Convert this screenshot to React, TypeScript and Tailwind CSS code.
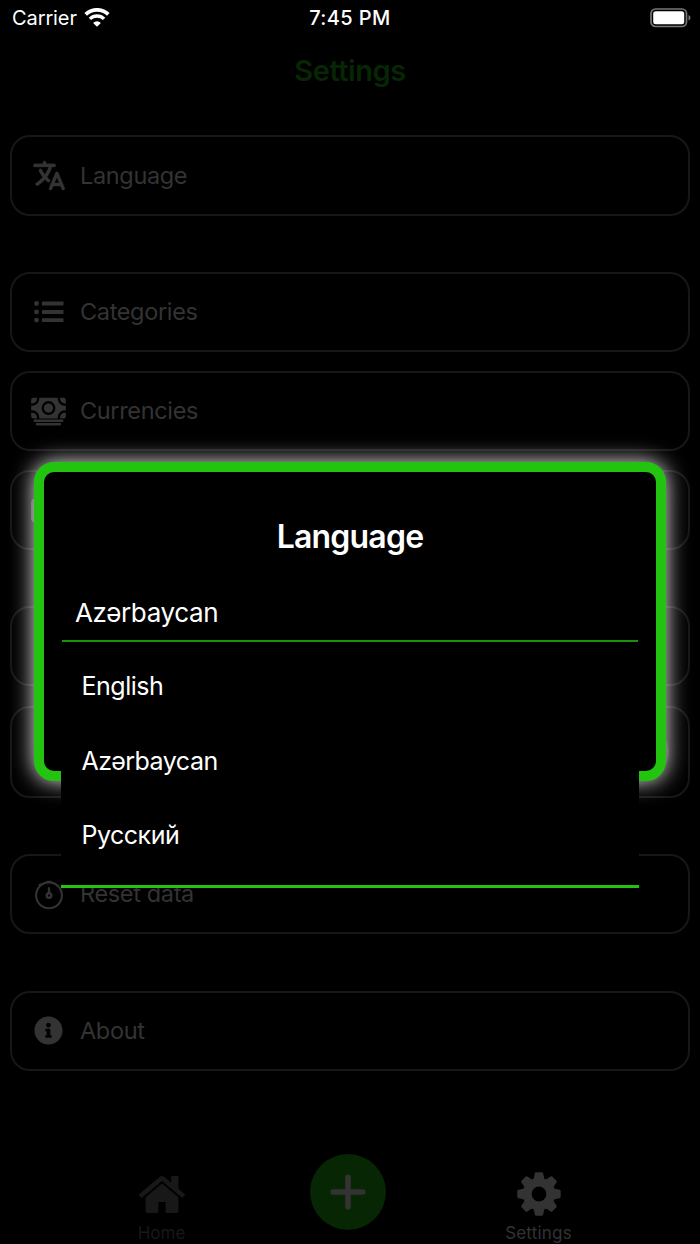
import type { ReactNode } from "react";
import clsx from "clsx";
import { IoCash, IoLanguage } from "react-icons/io5";
import { FaInfoCircle } from "react-icons/fa";

const ListIcon = () => (
  <svg width="30" height="22" viewBox="0 0 30 22" fill="currentColor">
    {[2.5, 11, 19.1].map((y) => (
      <g key={y}>
        <circle cx="2.5" cy={y} r="2.4" />
        <rect x="8" y={y - 1.9} width="21.5" height="3.8" rx="0.6" />
      </g>
    ))}
  </svg>
);

const TimerIcon = () => (
  <svg className="mt-px" width="30" height="30" viewBox="0 0 30 30" fill="none" stroke="currentColor" strokeWidth="2.1" strokeLinecap="round">
    <circle cx="15" cy="15.3" r="12.9" />
    <circle cx="15" cy="15.6" r="2.3" strokeWidth="2.4" />
    <path d="M15 13V8.200M13.400 1.900h3.200M5.600 5.200l1-.8" strokeWidth="2.3" />
  </svg>
);

const HomeIcon = () => (
  <svg className="shrink-0" width="46" height="37" viewBox="89 253 1614 1283" preserveAspectRatio="none" fill="currentColor">
    <path d="M1472 992v480q0 26-19 45t-45 19h-384v-384h-256v384h-384q-26 0-45-19t-19-45v-480q0-1 .5-3t.5-3l575-474 575 474q1 2 1 6zm223-69l-62 74q-8 9-21 11h-3q-13 0-21-7l-692-577-692 577q-12 8-24 7-13-2-21-11l-62-74q-8-10-7-23.5t11-21.5l719-599q32-26 76-26t76 26l244 204v-195q0-14 9-23t23-9h192q14 0 23 9t9 23v408l219 182q10 8 11 21.5t-7 23.500z" />
  </svg>
);

const GearIcon = () => (
  <svg className="shrink-0" width="44" height="44" viewBox="-22 -22 44 44" fill="currentColor">
    <mask id="gear-hole">
      <rect x="-22" y="-22" width="44" height="44" fill="#fff" />
      <circle r="7.4" fill="#000" />
    </mask>
    <g mask="url(#gear-hole)">
      <circle r="16.3" />
      {[0, 45, 90, 135, 180, 225, 270, 315].map((a) => (
        <path key={a} transform={`rotate(${a})`} d="M-5.4 -14.500L-4.200 -20.600Q-4 -21.700 -3 -21.700H3Q4 -21.700 4.200 -20.600L5.400 -14.500z" />
      ))}
    </g>
  </svg>
);

const WifiIcon = () => (
  <svg className="-mt-[2px]" width="26" height="19" viewBox="0 0 26 19" fill="none" stroke="#fff" strokeWidth="3.700">
    <path d="M1.700 6.400a16.200 16.200 0 0 1 22.600 0" />
    <path d="M5.900 10.900a10.200 10.200 0 0 1 14.200 0" strokeWidth="3.400" />
    <path d="M13 18.800l-3.900-3.900a5.500 5.500 0 0 1 7.800 0z" fill="#fff" stroke="none" />
  </svg>
);

const BatteryIcon = () => (
  <svg width="42" height="20" viewBox="0 0 42 20" fill="none">
    <rect x="1" y="1" width="35.500" height="17.500" rx="4.500" stroke="#777" strokeWidth="1.700" />
    <rect x="3.200" y="3.200" width="31" height="13" rx="2.500" fill="#fff" />
    <path d="M38.500 7q2 .7 2 2.800t-2 2.800z" fill="#777" />
  </svg>
);

type RowProps = { icon?: ReactNode; label?: string; className?: string; children?: ReactNode };

const Row = ({ icon, label, className, children }: RowProps) => (
  <div className={clsx("flex shrink-0 items-center rounded-[20px] border-2 border-[#171717] pl-[18px] pr-[19px]", className)}>
    <div className="flex w-[37px] shrink-0 justify-center">{icon}</div>
    <span className="ml-[13px] text-[23.500px] tracking-[-0.350px]">{label}</span>
    {children}
  </div>
);

const languages = ["English", "Azərbaycan", "Русский"];

const LanguageModal = () => (
  <div className="absolute left-[34px] top-[462px] h-[319px] w-[632px] rounded-[20px] border-10 border-[#22c40f] bg-black text-white shadow-[0_0_22px_rgba(255,255,255,0.92)]">
    <h2 className="mt-[45px] text-center text-[32px] font-semibold leading-[40px] tracking-[-0.800px]">Language</h2>
    <div className="mx-[18px] mt-[28px] flex h-[57px] items-center border-b-2 border-[#1a920c] pl-[13px] text-[26px] tracking-[-0.350px]">
      Azərbaycan
    </div>
    <div className="absolute left-[17px] top-[178px] w-[578px] border-b-3 border-[#22c40f] bg-black pb-[12px]">
      {languages.map((name) => (
        <div key={name} className="flex h-[74.300px] items-center pl-[20.500px] text-[25px] tracking-[-0.500px]">
          {name}
        </div>
      ))}
    </div>
  </div>
);

export default function App() {
  return (
    <div className="relative flex h-[1244px] w-[700px] flex-col overflow-hidden bg-black font-['Inter','Noto_Sans',sans-serif] text-[#333]">
      <div className="grid h-[36px] grid-cols-3 items-center pl-[10px] pr-[8px] text-[20px] text-white">
        <div className="flex items-center gap-[7px] pl-[2px]">
          <span className="tracking-[-0.100px]">Carrier</span>
          <WifiIcon />
        </div>
        <span className="-ml-[2px] text-center font-medium tracking-[0.400px]">7:45 PM</span>
        <div className="flex justify-end pb-px">
          <BatteryIcon />
        </div>
      </div>
      <h1 className="mt-[15px] text-center text-[29px] font-semibold leading-[40px] tracking-[-0.450px] text-[#062604]">Settings</h1>

      <div className="mt-[44px] flex flex-col px-[10px]">
        <Row className="h-[80.500px]" icon={<IoLanguage size={37} className="ml-px" stroke="currentColor" strokeWidth={5} />} label="Language" />
        <Row className="mt-[56px] h-[80px]" icon={<ListIcon />} label="Categories" />
        <Row className="mt-[19.500px] h-[80px]" icon={<IoCash size={37} className="-ml-px" />} label="Currencies" />
        <Row className="mt-[19px] h-[80px]" icon={<div className="h-[25px] w-[36px] rounded-[5px] bg-[#333]" />} />
        <Row className="mt-[56px] h-[80px]" />
        <Row className="mt-[19.500px] h-[92px]">
          <div className="ml-auto h-[46px] w-[76px] rounded-full bg-[#1a1a1a]" />
        </Row>
        <Row className="mt-[56.500px] h-[80px]" icon={<TimerIcon />} label="Reset data" />
        <Row className="mt-[56.500px] h-[80px]" icon={<FaInfoCircle size={29} />} label="About" />
      </div>

      <div className="mt-[83px] flex h-[90px] shrink-0 justify-center">
        <div className="flex w-[150px] flex-col items-center pt-[22px] text-[#181818]">
          <HomeIcon />
          <span className="mt-[8px] text-[17px] leading-[24px]">Home</span>
        </div>
        <div className="ml-[73px] mr-[78px] flex size-[76px] shrink-0 items-center justify-center rounded-full bg-[#062604]">
          <svg width="36" height="36" viewBox="0 0 36 36" stroke="currentColor" strokeWidth="5.600" strokeLinecap="round">
            <path d="M18 3.300v29.400M3.300 18h29.400" />
          </svg>
        </div>
        <div className="flex w-[150px] flex-col items-center pt-[18.500px]">
          <GearIcon />
          <span className="mt-[4.500px] text-[17px] leading-[24px] tracking-[0.200px]">Settings</span>
        </div>
      </div>

      <LanguageModal />
    </div>
  );
}
